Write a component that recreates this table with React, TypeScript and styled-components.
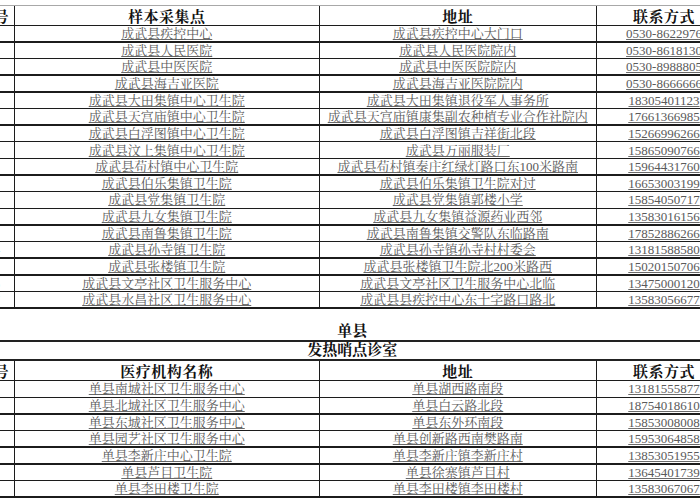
import React from "react";
import styled, { createGlobalStyle } from "styled-components";

const GlobalStyle = createGlobalStyle`
  html, body {
    margin: 0;
    padding: 0;
    background: #ffffff;
  }
  body {
    font-family: "Liberation Serif", "Noto Serif CJK SC", "Noto Sans CJK SC", serif;
  }
`;

const Page = styled.div`
  width: 700px;
  height: 500px;
  overflow: hidden;
  background: #ffffff;
`;

const Sheet = styled.div<{ $top?: boolean }>`
  display: grid;
  grid-template-columns: 40px 303.5px 275.5px 134px;
  column-gap: 1.5px;
  row-gap: 1.5px;
  padding: 0 1.5px 1.5px;
  width: max-content;
  margin-left: -28px;
  margin-top: ${(p) => (p.$top ? "5px" : "0")};
  border-top: ${(p) => (p.$top ? "1px solid #a8a8a8" : "none")};
  background: #1c1c1c;
`;

const HeadCell = styled.div`
  height: 18.5px;
  background: #ffffff;
  display: flex;
  align-items: center;
  justify-content: center;
  font-size: 15px;
  font-weight: 700;
  color: #111111;
  white-space: nowrap;
  letter-spacing: 0.5px;
`;

const Cell = styled.div`
  height: 15.15px;
  background: #ffffff;
  display: flex;
  align-items: center;
  justify-content: center;
  font-size: 13px;
  line-height: 15px;
  color: #5a5a5a;
  white-space: nowrap;
  overflow: hidden;
  text-decoration: underline;
  text-decoration-color: #6a6a6a;
  text-underline-offset: 1px;
`;

const Section = styled.div`
  margin-left: -28px;
  width: 760.5px;
  margin-top: 12.5px;
`;

const Title = styled.div<{ $h: number }>`
  height: ${(p) => p.$h}px;
  border-bottom: 2px solid #222222;
  display: flex;
  align-items: flex-end;
  justify-content: center;
  font-size: 15px;
  font-weight: 700;
  color: #111111;
  line-height: 17px;
  white-space: nowrap;
`;

const chengwu: [string, string, string][] = [
  ["成武县疾控中心", "成武县疾控中心大门口", "0530-8622976"],
  ["成武县人民医院", "成武县人民医院院内", "0530-8618130"],
  ["成武县中医医院", "成武县中医医院院内", "0530-8988805"],
  ["成武县海吉亚医院", "成武县海吉亚医院院内", "0530-8666666"],
  ["成武县大田集镇中心卫生院", "成武县大田集镇退役军人事务所", "18305401123"],
  ["成武县天宫庙镇中心卫生院", "成武县天宫庙镇康集副农种植专业合作社院内", "17661366985"],
  ["成武县白浮图镇中心卫生院", "成武县白浮图镇吉祥街北段", "15266996266"],
  ["成武县汶上集镇中心卫生院", "成武县万丽服装厂", "15865090766"],
  ["成武县苟村镇中心卫生院", "成武县苟村镇秦庄红绿灯路口东100米路南", "15964431760"],
  ["成武县伯乐集镇卫生院", "成武县伯乐集镇卫生院对过", "16653003199"],
  ["成武县党集镇卫生院", "成武县党集镇郭楼小学", "15854050717"],
  ["成武县九女集镇卫生院", "成武县九女集镇益源药业西邻", "13583016156"],
  ["成武县南鲁集镇卫生院", "成武县南鲁集镇交警队东临路南", "17852886266"],
  ["成武县孙寺镇卫生院", "成武县孙寺镇孙寺村村委会", "13181588580"],
  ["成武县张楼镇卫生院", "成武县张楼镇卫生院北200米路西", "15020150706"],
  ["成武县文亭社区卫生服务中心", "成武县文亭社区卫生服务中心北临", "13475000120"],
  ["成武县水昌社区卫生服务中心", "成武县县疾控中心东十字路口路北", "13583056677"],
];

const shanxian: [string, string, string][] = [
  ["单县南城社区卫生服务中心", "单县湖西路南段", "13181555877"],
  ["单县北城社区卫生服务中心", "单县白云路北段", "18754018610"],
  ["单县东城社区卫生服务中心", "单县东外环南段", "15853008008"],
  ["单县园艺社区卫生服务中心", "单县创新路西南樊路南", "15953064858"],
  ["单县李新庄中心卫生院", "单县李新庄镇李新庄村", "13853051955"],
  ["单县芦目卫生院", "单县徐寨镇芦目村", "13645401739"],
  ["单县李田楼卫生院", "单县李田楼镇李田楼村", "13583067067"],
];

interface TableProps {
  head: string;
  rows: [string, string, string][];
  top?: boolean;
}

function Table({ head, rows, top }: TableProps) {
  return (
    <Sheet $top={top}>
      <HeadCell>序号</HeadCell>
      <HeadCell>{head}</HeadCell>
      <HeadCell>地址</HeadCell>
      <HeadCell>联系方式</HeadCell>
      {rows.map((r, i) => (
        <React.Fragment key={i}>
          <Cell>{i + 1}</Cell>
          <Cell>{r[0]}</Cell>
          <Cell>{r[1]}</Cell>
          <Cell>{r[2]}</Cell>
        </React.Fragment>
      ))}
    </Sheet>
  );
}

function App() {
  return (
    <Page>
      <GlobalStyle />
      <Table head="样本采集点" rows={chengwu} top />
      <Section>
        <Title $h={19}>单县</Title>
        <Title $h={17}>发热哨点诊室</Title>
      </Section>
      <Table head="医疗机构名称" rows={shanxian} />
    </Page>
  );
}

export default App;
